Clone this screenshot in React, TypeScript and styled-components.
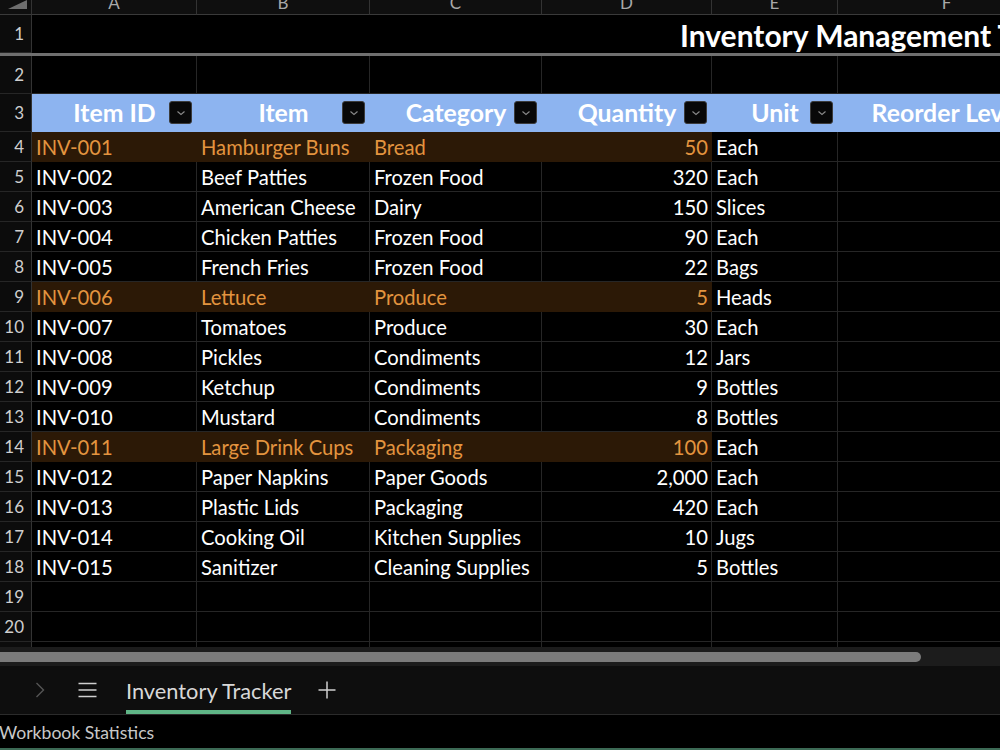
import React from 'react';
import styled, { createGlobalStyle } from 'styled-components';

const GlobalStyle = createGlobalStyle`
  html, body {
    margin: 0;
    padding: 0;
    background: #000;
  }
  body {
    font-family: Lato, "Noto Sans", sans-serif;
    overflow: hidden;
  }
`;

// column widths: row numbers, A..F
const COLUMNS = '32px 165px 173px 172px 170px 126px 218px';
const GRID = '#262626';

type Item = {
  id: string;
  name: string;
  category: string;
  qty: string;
  unit: string;
  low?: boolean;
};

const items: Item[] = [
  { id: 'INV-001', name: 'Hamburger Buns', category: 'Bread', qty: '50', unit: 'Each', low: true },
  { id: 'INV-002', name: 'Beef Patties', category: 'Frozen Food', qty: '320', unit: 'Each' },
  { id: 'INV-003', name: 'American Cheese', category: 'Dairy', qty: '150', unit: 'Slices' },
  { id: 'INV-004', name: 'Chicken Patties', category: 'Frozen Food', qty: '90', unit: 'Each' },
  { id: 'INV-005', name: 'French Fries', category: 'Frozen Food', qty: '22', unit: 'Bags' },
  { id: 'INV-006', name: 'Lettuce', category: 'Produce', qty: '5', unit: 'Heads', low: true },
  { id: 'INV-007', name: 'Tomatoes', category: 'Produce', qty: '30', unit: 'Each' },
  { id: 'INV-008', name: 'Pickles', category: 'Condiments', qty: '12', unit: 'Jars' },
  { id: 'INV-009', name: 'Ketchup', category: 'Condiments', qty: '9', unit: 'Bottles' },
  { id: 'INV-010', name: 'Mustard', category: 'Condiments', qty: '8', unit: 'Bottles' },
  { id: 'INV-011', name: 'Large Drink Cups', category: 'Packaging', qty: '100', unit: 'Each', low: true },
  { id: 'INV-012', name: 'Paper Napkins', category: 'Paper Goods', qty: '2,000', unit: 'Each' },
  { id: 'INV-013', name: 'Plastic Lids', category: 'Packaging', qty: '420', unit: 'Each' },
  { id: 'INV-014', name: 'Cooking Oil', category: 'Kitchen Supplies', qty: '10', unit: 'Jugs' },
  { id: 'INV-015', name: 'Sanitizer', category: 'Cleaning Supplies', qty: '5', unit: 'Bottles' },
];

const headers = ['Item ID', 'Item', 'Category', 'Quantity', 'Unit', 'Reorder Level'];
const letters = ['A', 'B', 'C', 'D', 'E', 'F'];

const Window = styled.div`
  width: 1000px;
  height: 750px;
  display: flex;
  flex-direction: column;
  overflow: hidden;
  background: #000;
`;

const Sheet = styled.div`
  height: 647px;
  overflow: hidden;
  flex-shrink: 0;
`;

const Row = styled.div<{ $height: number }>`
  display: grid;
  grid-template-columns: ${COLUMNS};
  height: ${p => p.$height}px;
`;

const Corner = styled.div`
  background: #0f0f0f;
  border-right: 1px solid #333;
  border-bottom: 1px solid #3a3a3a;
  display: flex;
  justify-content: flex-end;
  align-items: flex-start;
  padding-right: 4px;
`;

const ColumnLetter = styled.div`
  background: #0f0f0f;
  border-right: 1px solid #333;
  border-bottom: 1px solid #3a3a3a;
  color: #a8a8a8;
  font-size: 17px;
  line-height: 20px;
  text-align: center;
  overflow: hidden;

  span {
    display: block;
    margin-top: -7px;
  }
`;

const RowNumber = styled.div`
  background: #0c0c0c;
  border-right: 1px solid #333;
  border-bottom: 1px solid ${GRID};
  color: #cfcfcf;
  font-size: 17px;
  display: flex;
  align-items: center;
  justify-content: flex-end;
  padding-right: 7px;
`;

const TitleCell = styled.div`
  grid-column: 2 / -1;
  display: flex;
  align-items: center;
  padding: 2px 0 0 648px;
  color: #fff;
  font-size: 30px;
  font-weight: 700;
  white-space: nowrap;
  overflow: hidden;
`;

const FreezeLine = styled.div`
  height: 3px;
  background: #6f6f6f;
`;

const Cell = styled.div<{ $low?: boolean; $right?: boolean }>`
  display: flex;
  align-items: center;
  justify-content: ${p => (p.$right ? 'flex-end' : 'flex-start')};
  padding: 1px ${p => (p.$right ? '3px' : '4px')} 0;
  font-size: 20.2px;
  white-space: nowrap;
  overflow: hidden;
  color: ${p => (p.$low ? '#e3943f' : '#fff')};
  background: ${p => (p.$low ? '#2c1906' : '#000')};
  border-right: 1px solid ${p => (p.$low ? '#2c1906' : GRID)};
  border-bottom: 1px solid ${p => (p.$low ? '#2c1906' : GRID)};
`;

const HeaderCell = styled.div`
  display: grid;
  grid-template-columns: 28px 1fr 28px;
  align-items: center;
  background: #8db4f0;
  border-bottom: 1px solid #8db4f0;
  color: #fff;
  font-size: 24.8px;
  font-weight: 700;
  white-space: nowrap;
`;

const HeaderText = styled.span`
  text-align: center;
  overflow: visible;
`;

const FilterButton = styled.div`
  width: 23px;
  height: 23px;
  box-sizing: border-box;
  border-radius: 3px;
  background: #080808;
  border: 1px solid #3c3c3c;
  display: flex;
  align-items: center;
  justify-content: center;
`;

const ScrollTrack = styled.div`
  height: 19px;
  flex-shrink: 0;
  background: #1c1c1c;
  padding-top: 5px;
  box-sizing: border-box;
`;

const ScrollThumb = styled.div`
  width: 921px;
  height: 10px;
  background: #7b7b7b;
  border-radius: 0 5px 5px 0;
`;

const TabBar = styled.div`
  height: 48px;
  flex-shrink: 0;
  background: #0e0e0e;
  border-bottom: 1px solid #2b2b2b;
  display: flex;
  align-items: stretch;
`;

const TabIcon = styled.div<{ $gap: number }>`
  display: flex;
  align-items: center;
  margin-left: ${p => p.$gap}px;
`;

const SheetTab = styled.div`
  margin-left: 29px;
  display: flex;
  align-items: center;
  border-bottom: 4px solid #5fb586;
  padding-top: 4px;
  color: #d8d8d8;
  font-size: 21.8px;
  white-space: nowrap;
`;

const StatusBar = styled.div`
  height: 33px;
  flex-shrink: 0;
  border-bottom: 2px solid #3c6a55;
  display: flex;
  align-items: center;
  color: #c8c8c8;
  font-size: 17.6px;

  span {
    margin-left: -1px;
    padding-top: 1px;
  }
`;

const Chevron = () => (
  <svg width="10" height="6" viewBox="0 0 10 6">
    <path d="M1.5 1.5 L5 4.5 L8.5 1.5" fill="none" stroke="#8a8a8a" strokeWidth="1.1" />
  </svg>
);

const App: React.FC = () => {
  const emptyRow = (n: number, height = 30) => (
    <Row $height={height} key={`r${n}`}>
      <RowNumber>{n}</RowNumber>
      {letters.map(l => <Cell key={l} />)}
    </Row>
  );

  return <>
    <GlobalStyle />
    <Window>
      <Sheet>
        <Row $height={15}>
          <Corner>
            <svg width="19" height="9" viewBox="0 0 19 9">
              <polygon points="0,9 19,9 19,0" fill="#6e6e6e" />
            </svg>
          </Corner>
          {letters.map(l => <ColumnLetter key={l}><span>{l}</span></ColumnLetter>)}
        </Row>

        <Row $height={38}>
          <RowNumber>1</RowNumber>
          <TitleCell>Inventory Management Tracker</TitleCell>
        </Row>
        <FreezeLine />

        {emptyRow(2, 38)}

        <Row $height={38}>
          <RowNumber>3</RowNumber>
          {headers.map(h => (
            <HeaderCell key={h}>
              <span />
              <HeaderText>{h}</HeaderText>
              <FilterButton><Chevron /></FilterButton>
            </HeaderCell>
          ))}
        </Row>

        {items.map((it, i) => (
          <Row $height={30} key={it.id}>
            <RowNumber>{i + 4}</RowNumber>
            <Cell $low={it.low}>{it.id}</Cell>
            <Cell $low={it.low}>{it.name}</Cell>
            <Cell $low={it.low}>{it.category}</Cell>
            <Cell $low={it.low} $right>{it.qty}</Cell>
            <Cell>{it.unit}</Cell>
            <Cell />
          </Row>
        ))}

        {emptyRow(19)}
        {emptyRow(20)}
        {emptyRow(21)}
      </Sheet>

      <ScrollTrack>
        <ScrollThumb />
      </ScrollTrack>

      <TabBar>
        <TabIcon $gap={35}>
          <svg width="10" height="16" viewBox="0 0 10 16">
            <path d="M1.5 1 L8.5 8 L1.5 15" fill="none" stroke="#555" strokeWidth="1.4" />
          </svg>
        </TabIcon>
        <TabIcon $gap={33}>
          <svg width="19" height="16" viewBox="0 0 19 16">
            <path d="M0.5 1.5 H18.5 M0.5 8 H18.5 M0.5 14.5 H18.5" stroke="#cfcfcf" strokeWidth="1.5" />
          </svg>
        </TabIcon>
        <SheetTab>Inventory Tracker</SheetTab>
        <TabIcon $gap={27}>
          <svg width="18" height="18" viewBox="0 0 18 18">
            <path d="M9 0.5 V17.5 M0.5 9 H17.5" stroke="#cfcfcf" strokeWidth="1.5" />
          </svg>
        </TabIcon>
      </TabBar>

      <StatusBar><span>Workbook Statistics</span></StatusBar>
    </Window>
  </>;
};

export default App;
